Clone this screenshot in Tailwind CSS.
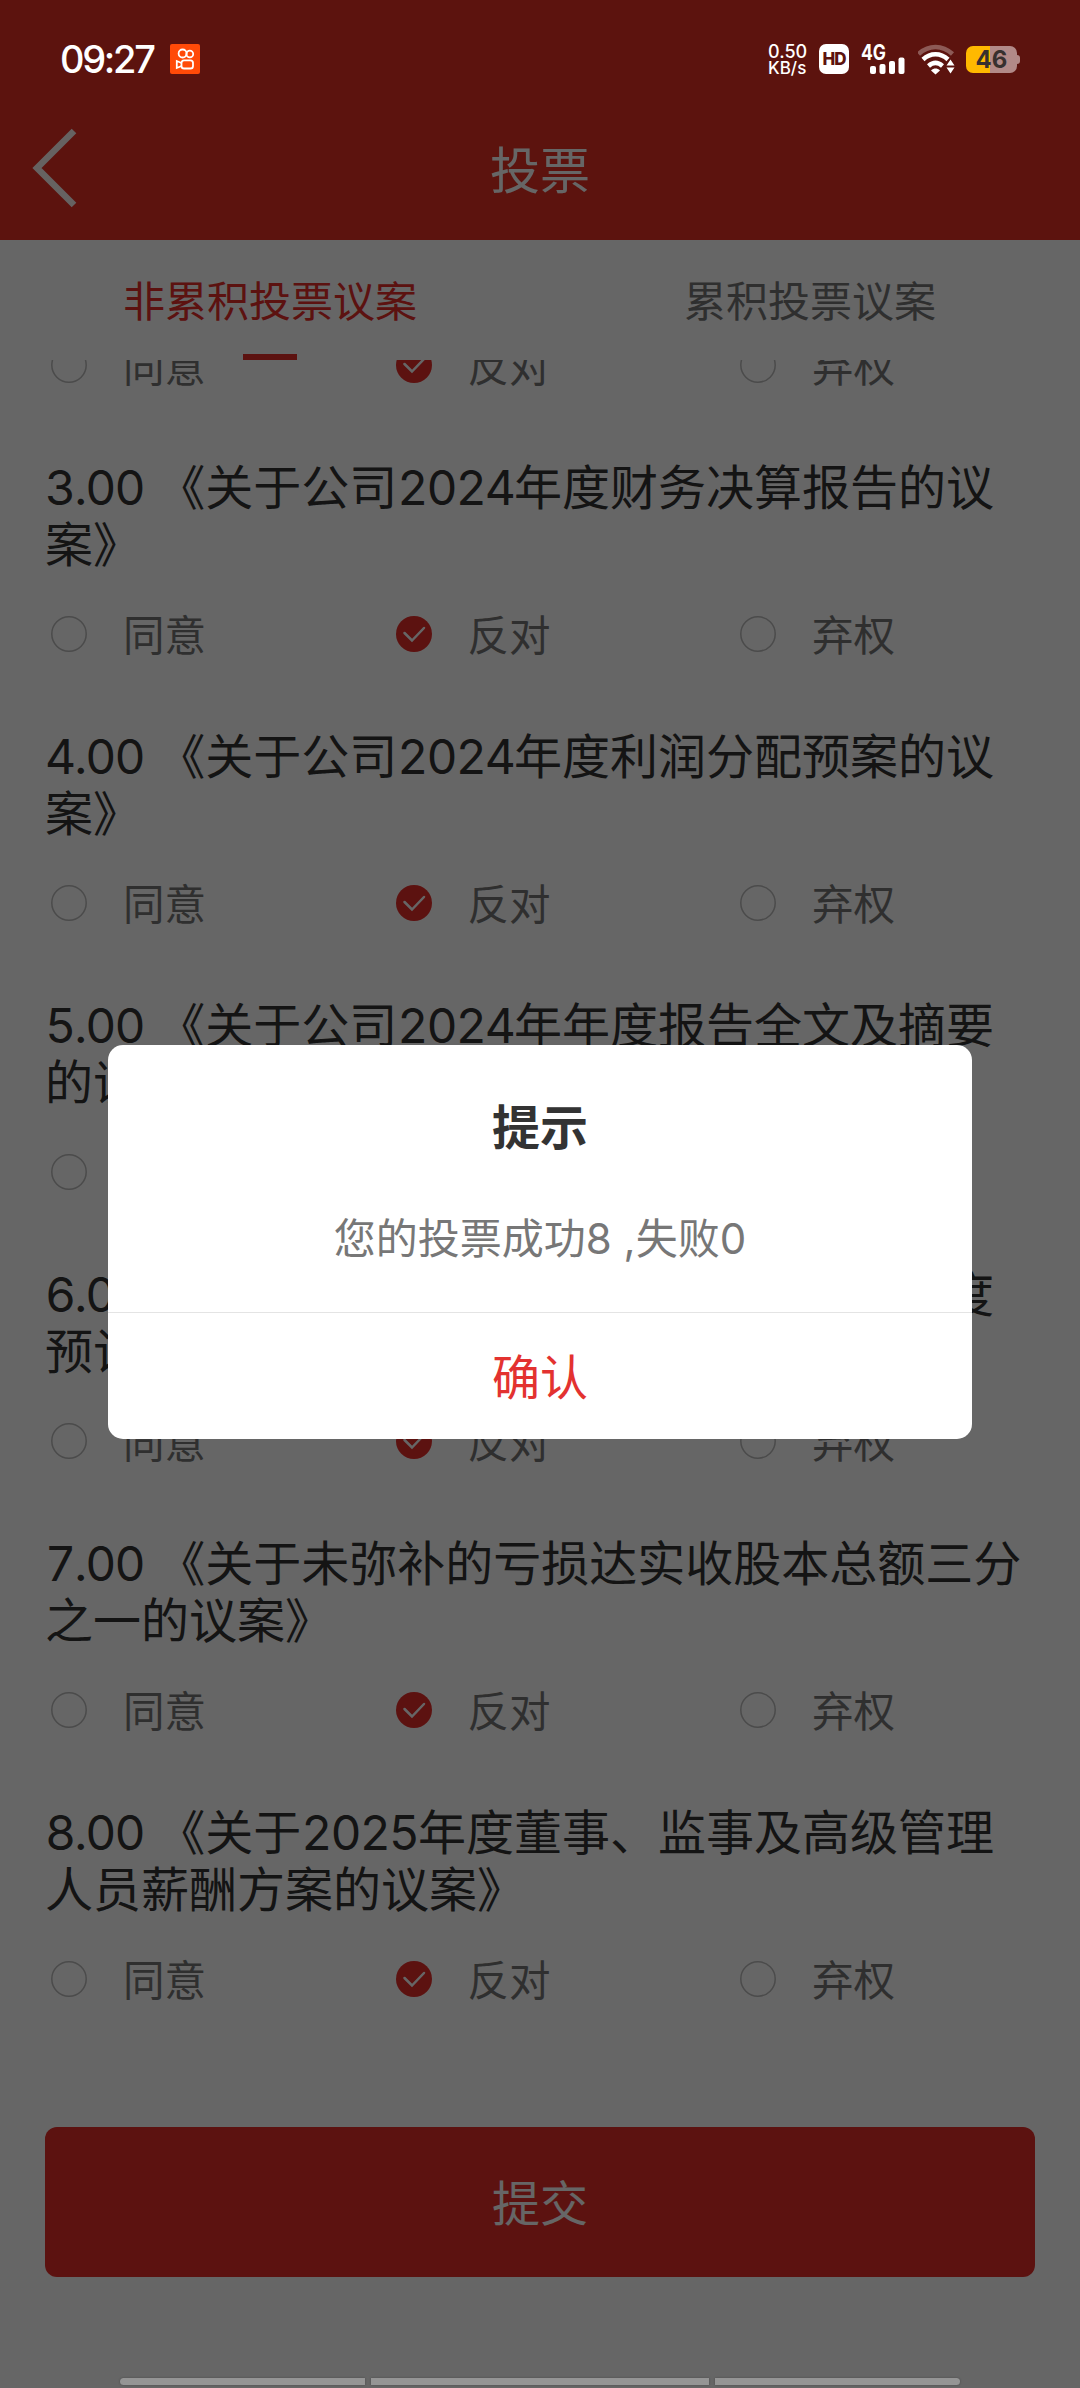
<!DOCTYPE html>
<html lang="zh-CN">
<head>
    <meta charset="UTF-8">
    <meta name="viewport" content="width=device-width, initial-scale=1.0">
    <title>投票</title>
    <script src="https://cdn.jsdelivr.net/npm/@tailwindcss/browser@4"></script>
</head>
<body class="bg-white font-[Inter,'Noto_Sans_CJK_SC',sans-serif]">
    <div class="relative w-[1080px] h-[2388px] overflow-hidden flex flex-col">

        <!-- Header -->
        <header class="h-[240px] shrink-0 bg-[#e63023] pt-[96px]">
            <div class="h-[144px] grid grid-cols-3 items-center">
                <svg class="ml-[31px] w-[48px] h-[84px]" viewBox="0 0 48 84" fill="none" stroke="#fff" stroke-opacity=".95" stroke-width="6.5">
                    <path d="M43 5L6 42l37 37"/>
                </svg>
                <h1 class="pt-[6px] text-center text-[50px] leading-[60px] text-white">投票</h1>
            </div>
        </header>

        <!-- Tabs -->
        <nav class="h-[120px] shrink-0 grid grid-cols-2 text-[42px] leading-[60px] text-center">
            <div class="flex flex-col items-center justify-between pt-[32px] text-[#e62d2a]">
                <span>非累积投票议案</span>
                <span class="w-[54px] h-[6px] bg-[#e62d2a]"></span>
            </div>
            <div class="pt-[32px] text-[#777]">累积投票议案</div>
        </nav>

        <!-- Proposal list, scrolled up by part of an item -->
        <main id="list" class="h-[1690px] shrink-0 overflow-hidden"></main>

        <div class="px-[45px] pt-[77px]">
            <button class="w-full h-[150px] pt-[4px] rounded-xl bg-[#e62d2a] text-white text-[48px]">提交</button>
        </div>

        <!-- Mask and dialog -->
        <div class="absolute inset-0 bg-black/60 flex flex-col items-center pt-[1045px]">
            <div class="w-[864px] h-[394px] rounded-[15px] bg-white flex flex-col text-center">
                <h2 class="pt-[53px] text-[48px] leading-[60px] font-bold text-[#333]">提示</h2>
                <p class="pt-[51px] h-[154px] text-[42px] leading-[60px] text-[#777]">您的投票成功8 ,失败0</p>
                <button class="grow pt-[4px] border-t border-[#e4e4e4] text-[48px] leading-[60px] text-[#e33230]">确认</button>
            </div>
        </div>

        <!-- Status bar -->
        <div class="absolute top-0 inset-x-0 h-[96px] pt-[22px] px-[60px] flex justify-between items-center text-white">
            <div class="flex items-center">
                <span class="w-[98px] text-[38px] leading-[40px] font-medium tracking-[-2.3px]">09:27</span>
                <svg class="ml-[12px] w-[30px] h-[30px]" viewBox="0 0 30 30" fill="none" stroke="#fff" stroke-width="1.8">
                    <rect width="30" height="30" rx="2" fill="#ff4a08" stroke="none"/>
                    <circle cx="12.6" cy="9.5" r="4"/>
                    <circle cx="19.8" cy="10" r="3.4"/>
                    <rect x="11.5" y="16.3" width="11.5" height="8.2" rx="2.6"/>
                    <path d="M11.5 19L6.8 17v7l4.7-2"/>
                </svg>
            </div>
            <div class="flex items-center">
                <div class="pt-px w-[38px] text-center text-[17px] leading-[16px] font-medium whitespace-nowrap">
                    <div class="text-[18px]">0.50</div>
                    <div>KB/s</div>
                </div>
                <div class="ml-[13px] w-[30px] h-[30px] rounded-[7px] bg-white text-[#5c130e] text-[17px] leading-[30px] font-extrabold text-center tracking-[-1px]">HD</div>
                <svg class="ml-[12px] w-[46px] h-[32px]" viewBox="0 0 46 32" fill="#fff">
                    <text x="0" y="16.5" font-size="21" font-weight="700" textLength="25" lengthAdjust="spacingAndGlyphs">4G</text>
                    <rect x="9" y="23" width="6" height="8" rx="2"/>
                    <rect x="18.5" y="21" width="6" height="10" rx="2"/>
                    <rect x="28" y="18" width="6" height="13" rx="2"/>
                    <rect x="37.5" y="14.5" width="6" height="16.5" rx="2"/>
                </svg>
                <svg class="ml-[11px] w-[38px] h-[32px]" viewBox="0 0 38 32" fill="none" stroke="#fff" stroke-width="4.5">
                    <path d="M.5 11C10.5 1.5 24.5 1.5 34.5 11" stroke-opacity=".3"/>
                    <path d="M5 16.5C12.5 9.500 22.500 9.500 30 16.500"/>
                    <path d="M10.500 23C15 19 20 19 24.500 23"/>
                    <path d="M13 27.500c3-2.600 6-2.600 9 0l-4.500 4z" fill="#fff" stroke="none"/>
                    <path d="M28.500 22.500l4-6 4 6zM28.500 24.500l4 6 4-6z" fill="#fff" stroke="none"/>
                </svg>
                <div class="ml-[10px] flex items-center">
                    <div class="w-[51px] h-[27px] rounded-[7px] bg-linear-to-r from-[#ffb900] from-47% to-[#b28a88] to-47% text-[#38302e] text-[24px] leading-[27px] font-bold text-center">46</div>
                    <div class="w-[3px] h-[9px] rounded-r-sm bg-[#b28a88]"></div>
                </div>
            </div>
        </div>

        <!-- Navigation hints -->
        <div class="absolute bottom-[3px] inset-x-[120px] flex gap-[6px]">
            <span class="w-[245px] h-[7px] rounded-l-full bg-[#959595] shadow-[0_0_2px_#444]"></span>
            <span class="grow h-[7px] bg-[#959595] shadow-[0_0_2px_#444]"></span>
            <span class="w-[245px] h-[7px] rounded-r-full bg-[#959595] shadow-[0_0_2px_#444]"></span>
        </div>
    </div>

    <script>
        const proposals = [
            ['2.00 《关于公司2024年度监事会工作报告的议', '案》'],
            ['3.00 《关于公司2024年度财务决算报告的议', '案》'],
            ['4.00 《关于公司2024年度利润分配预案的议', '案》'],
            ['5.00 《关于公司2024年年度报告全文及摘要', '的议案》'],
            ['6.00 《关于公司日常关联交易情况2025年度', '预计的议案》'],
            ['7.00 《关于未弥补的亏损达实收股本总额三分', '之一的议案》'],
            ['8.00 《关于2025年度董事、监事及高级管理', '人员薪酬方案的议案》'],
        ];

        const empty = '<svg class="w-[36px] h-[36px]" viewBox="0 0 36 36"><circle cx="18" cy="18" r="17.2" fill="none" stroke="#bbb" stroke-width="1.5"/></svg>';
        const checked = '<svg class="w-[36px] h-[36px]" viewBox="0 0 36 36"><circle cx="18" cy="18" r="18" fill="#e62d2a"/><path d="M8.5 17l7.5 7.5L28 12" fill="none" stroke="#fff" stroke-width="2.5" stroke-linecap="round"/></svg>';

        function option(icon, label) {
            return `<div class="w-[344.5px] shrink-0 flex items-center gap-[36px]">${icon}<span class="pt-[5px]">${label}</span></div>`;
        }

        // digits are set slightly tighter than the Chinese text
        function digits(text) {
            return text.replace(/[\d.]+/g, '<span class="tabular-nums tracking-[-1.9px]">$&</span>');
        }

        document.getElementById('list').innerHTML = proposals.map(([first, second], i) => `
            <section class="h-[269px] pl-[45px] ${i === 0 ? '-mt-[172px]' : ''}">
                <h3 class="h-[144px] pt-[2px] text-[48px] leading-[57px] text-[#333] whitespace-nowrap [text-spacing-trim:space-all]">${digits(first)}<br>${second}</h3>
                <div class="flex pl-[6px] text-[41.5px] leading-[60px] text-[#777]">
                    ${option(empty, '同意')}${option(checked, '反对')}${option(empty, '弃权')}
                </div>
            </section>`).join('');
    </script>
</body>
</html>
